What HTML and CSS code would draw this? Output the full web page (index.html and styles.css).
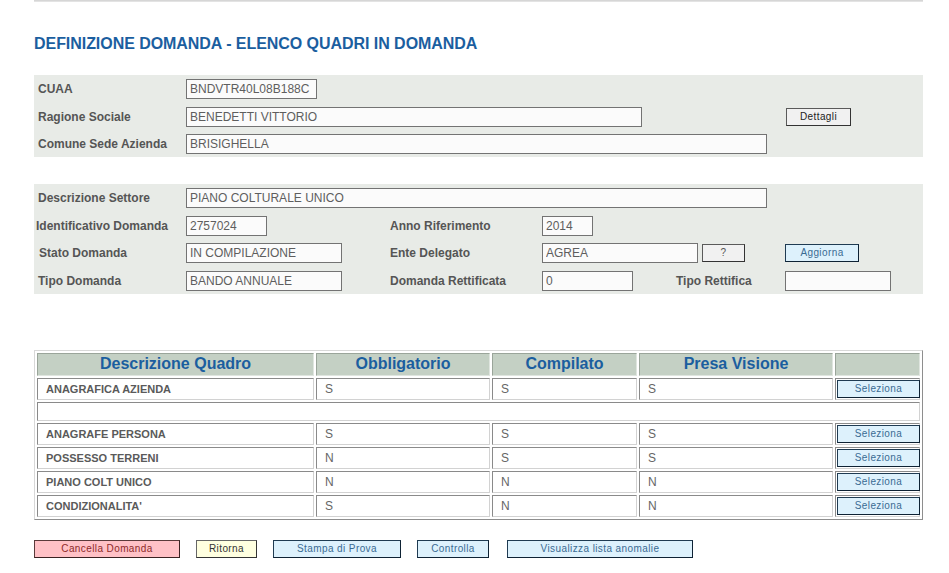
FILE: index.html
```html
<!DOCTYPE html>
<html lang="it">
<head>
<meta charset="utf-8">
<title>Definizione Domanda - Elenco Quadri in Domanda</title>
<link rel="stylesheet" href="styles.css">
</head>
<body>
<div class="page">
  <div class="topbar"></div>
  <h1 class="title">DEFINIZIONE DOMANDA - ELENCO QUADRI IN DOMANDA</h1>

  <div class="panel p1">
    <div class="row">
      <span class="lbl">CUAA</span>
      <input class="fld w131" type="text" readonly value="BNDVTR40L08B188C">
    </div>
    <div class="row">
      <span class="lbl">Ragione Sociale</span>
      <input class="fld w456" type="text" readonly value="BENEDETTI VITTORIO">
      <button class="btn grey dettagli">Dettagli</button>
    </div>
    <div class="row">
      <span class="lbl">Comune Sede Azienda</span>
      <input class="fld w581" type="text" readonly value="BRISIGHELLA">
    </div>
  </div>

  <div class="panel p2">
    <div class="row">
      <span class="lbl">Descrizione Settore</span>
      <input class="fld w581" type="text" readonly value="PIANO COLTURALE UNICO">
    </div>
    <div class="row">
      <span class="lbl tight">Identificativo Domanda</span>
      <span class="cell c204"><input class="fld w81" type="text" readonly value="2757024"></span>
      <span class="lbl2">Anno Riferimento</span>
      <input class="fld w51" type="text" readonly value="2014">
    </div>
    <div class="row">
      <span class="lbl indent">Stato Domanda</span>
      <span class="cell c204"><input class="fld w156" type="text" readonly value="IN COMPILAZIONE"></span>
      <span class="lbl2">Ente Delegato</span>
      <input class="fld w156" type="text" readonly value="AGREA">
      <button class="btn grey qmark">?</button>
      <button class="btn blue aggiorna">Aggiorna</button>
    </div>
    <div class="row">
      <span class="lbl">Tipo Domanda</span>
      <span class="cell c204"><input class="fld w156" type="text" readonly value="BANDO ANNUALE"></span>
      <span class="lbl2">Domanda Rettificata</span>
      <span class="cell c133"><input class="fld w91" type="text" readonly value="0"></span>
      <span class="lbl3">Tipo Rettifica</span>
      <input class="fld w106" type="text" readonly value="">
    </div>
  </div>

  <table class="quadri">
    <colgroup>
      <col class="k1"><col class="k2"><col class="k3"><col class="k4"><col class="k5">
    </colgroup>
    <thead>
      <tr><th>Descrizione Quadro</th><th>Obbligatorio</th><th>Compilato</th><th>Presa Visione</th><th></th></tr>
    </thead>
    <tbody>
      <tr><td class="name">ANAGRAFICA AZIENDA</td><td>S</td><td>S</td><td>S</td><td class="act"><button class="btn blue sel">Seleziona</button></td></tr>
      <tr class="spacer"><td colspan="5"></td></tr>
      <tr><td class="name">ANAGRAFE PERSONA</td><td>S</td><td>S</td><td>S</td><td class="act"><button class="btn blue sel">Seleziona</button></td></tr>
      <tr><td class="name">POSSESSO TERRENI</td><td>N</td><td>S</td><td>S</td><td class="act"><button class="btn blue sel">Seleziona</button></td></tr>
      <tr><td class="name">PIANO COLT UNICO</td><td>N</td><td>N</td><td>N</td><td class="act"><button class="btn blue sel">Seleziona</button></td></tr>
      <tr><td class="name">CONDIZIONALITA'</td><td>S</td><td>N</td><td>N</td><td class="act"><button class="btn blue sel">Seleziona</button></td></tr>
    </tbody>
  </table>

  <div class="actions">
    <button class="btn pink a1">Cancella Domanda</button>
    <button class="btn yellow a2">Ritorna</button>
    <button class="btn blue a3">Stampa di Prova</button>
    <button class="btn blue a4">Controlla</button>
    <button class="btn blue a5">Visualizza lista anomalie</button>
  </div>
</div>
</body>
</html>
```

FILE: styles.css
```css
* { box-sizing: border-box; }

body {
  margin: 0;
  background: #ffffff;
  font-family: "Liberation Sans", Arial, sans-serif;
  color: #555;
}

.page {
  margin-left: 34px;
  width: 889px;
}

.topbar {
  height: 2px;
  background: #e3e3e3;
  border-top: 1px solid #d6d6d6;
}

.title {
  margin: 33px 0 0;
  font-size: 16px;
  line-height: 18px;
  font-weight: bold;
  color: #1b5e9f;
  letter-spacing: -0.05px;
}

.panel {
  background: #e8ebe7;
  display: flex;
  flex-direction: column;
  gap: 7.5px;
  padding: 4px 0 3px;
}

.p1 { margin-top: 22px; }
.p2 { margin-top: 27px; }

.row {
  display: flex;
  align-items: center;
  height: 20px;
}

.lbl, .lbl2, .lbl3 {
  font-size: 12px;
  font-weight: bold;
  color: #555;
  flex: none;
}

.lbl { width: 152px; padding-left: 4px; }
.lbl.tight { padding-left: 2px; }
.lbl.indent { padding-left: 5px; }
.lbl2 { width: 152px; }
.lbl3 { width: 110px; padding-left: 1px; }

.cell { flex: none; display: flex; align-items: center; }
.c204 { width: 204px; }
.c133 { width: 133px; }

.fld {
  flex: none;
  height: 20px;
  margin: 0;
  padding: 0 0 0 3px;
  border: 1px solid #737373;
  background: #fbfbfb;
  font-family: "Liberation Sans", Arial, sans-serif;
  font-size: 12px;
  color: #5e5e5e;
  outline: none;
}

.w51 { width: 51px; }
.w81 { width: 81px; }
.w91 { width: 91px; }
.w106 { width: 106px; }
.w131 { width: 131px; }
.w156 { width: 156px; }
.w456 { width: 456px; }
.w581 { width: 581px; }

.btn {
  margin: 0;
  padding: 0;
  font-family: "Liberation Sans", Arial, sans-serif;
  font-size: 10px;
  letter-spacing: 0.4px;
  line-height: 1;
  border: 1px solid #1f3b52;
  border-right-color: #0e2234;
  border-bottom-color: #0e2234;
  cursor: pointer;
  flex: none;
}

.grey {
  background: #f1f1f1;
  color: #222;
  border-color: #5a5a5a #333 #333 #5a5a5a;
}

.blue {
  background: #ddf1fc;
  color: #3a6b93;
}

.pink {
  background: #ffc1c6;
  color: #8e2a2a;
  border-color: #5a3a3a #3a2222 #3a2222 #5a3a3a;
}

.yellow {
  background: #ffffe0;
  color: #333;
  border-color: #666 #333 #333 #666;
}

.dettagli { width: 65px; height: 18px; margin-left: 144px; }
.qmark { width: 43px; height: 18px; margin-left: 4px; color: #555; }
.aggiorna { width: 74px; height: 18px; margin-left: 40px; }

.quadri {
  margin-top: 56px;
  width: 889px;
  table-layout: fixed;
  border-collapse: separate;
  border-spacing: 2px;
  border: 1px solid;
  border-color: #d8d8d8 #8e8e8e #8e8e8e #d8d8d8;
}

.k1 { width: 277px; }
.k2 { width: 174px; }
.k3 { width: 145px; }
.k4 { width: 194px; }

.quadri th {
  height: 23px;
  padding: 0;
  background: #c4d0c4;
  border: 1px solid;
  border-color: #9aa59a #dfe5df #dfe5df #9aa59a;
  font-size: 16px;
  font-weight: bold;
  color: #1b5e9f;
  text-align: center;
}

.quadri td {
  height: 22px;
  padding: 0 0 0 8px;
  border: 1px solid;
  border-color: #8a8a8a #d2d2d2 #d2d2d2 #8a8a8a;
  font-size: 12px;
  color: #666;
  vertical-align: middle;
}

.quadri td.name {
  padding-left: 8px;
  font-size: 11px;
  font-weight: bold;
  color: #5a5a5a;
}

.quadri td.act {
  padding: 1px 2px 1px 1px;
}

.quadri .spacer td {
  height: 19px;
  padding: 0;
}

.sel {
  display: block;
  width: 83px;
  height: 18px;
}

.actions {
  margin-top: 20px;
  display: flex;
  gap: 16px;
}

.actions .btn { height: 18px; }
.a1 { width: 146px; }
.a2 { width: 61px; }
.a3 { width: 128px; }
.a4 { width: 72px; }
.a5 { width: 186px; margin-left: 2px; }
```
